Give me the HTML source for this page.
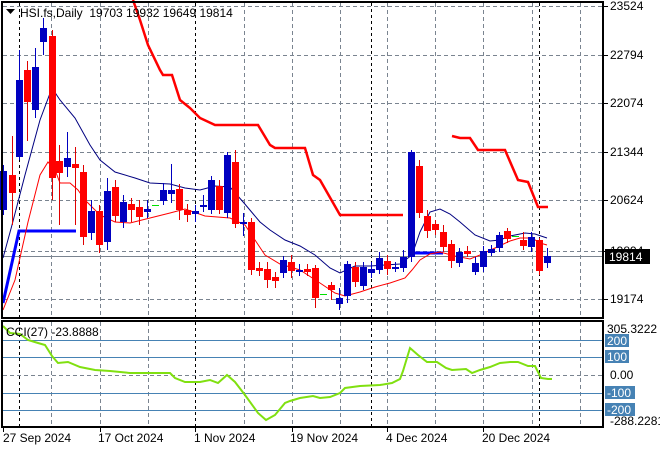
<!DOCTYPE html>
<html><head><meta charset="utf-8"><style>
html,body{margin:0;padding:0;background:#fff;width:660px;height:450px;overflow:hidden}
svg text{font-family:"Liberation Sans",sans-serif;font-size:12px;fill:#000}
</style></head><body>
<svg width="660" height="450" viewBox="0 0 660 450" xmlns="http://www.w3.org/2000/svg">
<g stroke="#7a8490" stroke-width="1" stroke-dasharray="4,3" fill="none">
<path d="M3 6.5H603M3 55.5H603M3 103.5H603M3 152.5H603M3 200.5H603M3 251.5H603M3 299.5H603"/>
<path d="M51.5 3V317M100.5 3V317M148.5 3V317M244.5 3V317M292.5 3V317M340.5 3V317M387.5 3V317M435.5 3V317M483.5 3V317M532.5 3V317M580.5 3V317"/>
<path d="M51.5 322V426M100.5 322V426M148.5 322V426M244.5 322V426M292.5 322V426M340.5 322V426M387.5 322V426M435.5 322V426M483.5 322V426M532.5 322V426M580.5 322V426"/>
<path d="M3 375.5H603"/>
</g>
<g stroke="#000" stroke-dasharray="3,3"><path d="M19.5 3V317M195.5 3V317M371.5 3V317M539.5 3V317M19.5 322V426M195.5 322V426M371.5 322V426M539.5 322V426"/></g>
<path d="M3 256.5H603" stroke="#7a8490"/>
<polyline fill="none" stroke="#ff0000" stroke-width="2.5" points="133,0 140,20 148,45 160,70 163,75 172,75 180,100 190,108 200,118 215,125 245,125 258,125 270,145 275,148 305,148 313,175 320,180 340,215 403,215"/>
<polyline fill="none" stroke="#ff0000" stroke-width="2.5" points="452,136 460,138 470,138 478,150 505,150 518,180 528,182 538,207 548,207"/>
<polyline fill="none" stroke="#0000ff" stroke-width="3" points="3,303 19,231 76,231"/>
<polyline fill="none" stroke="#0000ff" stroke-width="3" points="414,253 443,253"/>
<polyline fill="none" stroke="#000080" stroke-width="1" points="3,258 12,225 25,175 40,120 52,88 60,100 75,118 90,145 100,160 115,172 135,178 150,183 170,184 185,188 200,190 215,186 230,187 244,203 260,222 270,230 285,240 300,246 315,255 330,268 340,273 355,266 370,266 385,265 400,264 412,255 420,232 430,212 440,209 450,214 460,222 475,235 490,241 500,240 510,236 525,233 535,234 547,238"/>
<polyline fill="none" stroke="#ff0000" stroke-width="1" points="3,310 15,280 28,222 40,175 48,162 55,170 60,183 70,183 78,190 85,200 100,215 115,222 130,223 150,218 170,213 185,209 205,216 230,218 245,225 255,240 265,255 280,264 300,270 320,283 335,293 345,296 360,292 375,287 390,283 405,278 412,270 420,260 430,254 440,252 455,256 470,259 480,255 495,248 510,241 520,238 532,238 540,243 547,245"/>
<g stroke-width="1">
<path stroke="#0000c0" d="M3.5 165V215M19.5 50V160M35.5 48V118M43.5 18V55M67.5 132V177M91.5 200V240M107.5 178V250M123.5 195V228M147.5 200V218M163.5 183V205M171.5 164V203M195.5 205V222M203.5 195V212M211.5 176V214M227.5 152V218M243.5 213V236M283.5 256V278M299.5 264V276M339.5 288V310M347.5 261V303M363.5 262V290M371.5 262V278M379.5 252V274M395.5 262V272M403.5 250V272M411.5 150V262M459.5 248V267M475.5 257V275M483.5 246V272M491.5 245V256M499.5 232V252M531.5 232V252M547.5 248V268"/>
<path stroke="#e00000" d="M12.5 136V225M27.5 61V141M52.5 30V200M59.5 145V225M75.5 147V225M83.5 165V245M99.5 205V253M115.5 180V222M131.5 198V222M139.5 200V225M179.5 184V220M187.5 204V222M219.5 180V214M235.5 150V228M251.5 218V275M259.5 262V276M267.5 262V288M275.5 272V288M291.5 255V278M307.5 264V276M315.5 265V308M331.5 282V300M355.5 262V287M387.5 255V275M419.5 160V218M427.5 210V238M435.5 220V235M443.5 225V252M451.5 240V268M467.5 246V257M507.5 228V243M523.5 232V250M539.5 238V275"/>
</g>
<g fill="#0000c0">
<rect x="0" y="171" width="7" height="39"/><rect x="16" y="80" width="7" height="77"/><rect x="32" y="67" width="7" height="43"/><rect x="40" y="28" width="7" height="14"/><rect x="64" y="158" width="7" height="9"/><rect x="88" y="211" width="7" height="22"/><rect x="104" y="191" width="7" height="51"/><rect x="120" y="202" width="7" height="20"/><rect x="144" y="209" width="7" height="3"/><rect x="160" y="190" width="7" height="11"/><rect x="168" y="190" width="7" height="4"/><rect x="192" y="211" width="7" height="3"/><rect x="200" y="205" width="7" height="2"/><rect x="208" y="180" width="7" height="30"/><rect x="224" y="155" width="7" height="58"/><rect x="240" y="222" width="7" height="2"/><rect x="280" y="260" width="7" height="13"/><rect x="296" y="270" width="7" height="2"/><rect x="336" y="298" width="7" height="6"/><rect x="344" y="264" width="7" height="32"/><rect x="360" y="267" width="7" height="19"/><rect x="368" y="269" width="7" height="4"/><rect x="376" y="258" width="7" height="12"/><rect x="392" y="267" width="7" height="2"/><rect x="400" y="257" width="7" height="11"/><rect x="408" y="152" width="7" height="105"/><rect x="456" y="252" width="7" height="11"/><rect x="472" y="263" width="7" height="9"/><rect x="480" y="251" width="7" height="16"/><rect x="488" y="249" width="7" height="4"/><rect x="496" y="235" width="7" height="13"/><rect x="528" y="237" width="7" height="10"/><rect x="544" y="256" width="7" height="7"/>
</g>
<g fill="#ff0000">
<rect x="9" y="175" width="7" height="18"/><rect x="24" y="70" width="7" height="32"/><rect x="49" y="36" width="7" height="142"/><rect x="56" y="161" width="7" height="12"/><rect x="72" y="164" width="7" height="4"/><rect x="80" y="172" width="7" height="65"/><rect x="96" y="211" width="7" height="34"/><rect x="112" y="187" width="7" height="29"/><rect x="128" y="204" width="7" height="6"/><rect x="136" y="207" width="7" height="10"/><rect x="176" y="189" width="7" height="21"/><rect x="184" y="210" width="7" height="5"/><rect x="216" y="186" width="7" height="24"/><rect x="232" y="162" width="7" height="62"/><rect x="248" y="222" width="7" height="48"/><rect x="256" y="268" width="7" height="3"/><rect x="264" y="269" width="7" height="11"/><rect x="272" y="277" width="7" height="4"/><rect x="288" y="262" width="7" height="9"/><rect x="304" y="269" width="7" height="3"/><rect x="312" y="268" width="7" height="30"/><rect x="328" y="285" width="7" height="5"/><rect x="352" y="267" width="7" height="15"/><rect x="384" y="261" width="7" height="8"/><rect x="416" y="166" width="7" height="47"/><rect x="424" y="216" width="7" height="15"/><rect x="432" y="224" width="7" height="6"/><rect x="440" y="232" width="7" height="15"/><rect x="448" y="244" width="7" height="17"/><rect x="464" y="251" width="7" height="3"/><rect x="504" y="231" width="7" height="8"/><rect x="520" y="240" width="7" height="6"/><rect x="536" y="240" width="7" height="31"/>
</g>
<g stroke="#00e000"><path d="M152 205.5H159M320 294.5H327M512 236.5H519"/></g>
<g stroke="#4682b4"><path d="M3 340.5H603M3 357.5H603M3 393.5H603M3 410.5H603"/></g>
<polyline fill="none" stroke="#80e010" stroke-width="2" points="3,326 10,333 20,334 28,340 38,343 45,345 52,356 58,363 68,362 80,367 95,370 110,371 130,373 150,373 170,373 175,378 185,382 200,382 210,380 218,383 227,375 235,382 245,395 258,413 266,420 275,415 285,403 290,401 300,398 313,396 320,398 330,397 340,393 345,388 360,386 380,385 392,383 400,379 403,371 410,348 418,355 427,362 437,362 446,368 452,370 466,369 472,373 480,370 490,367 500,363 510,362 518,362 528,366 535,366 541,378 548,379 552,379"/>
<g fill="none" stroke="#000" stroke-width="2"><rect x="2" y="2" width="601" height="316"/><rect x="2" y="321" width="601" height="106"/></g>
<g stroke="#000"><path d="M603 6.5H608M603 55.5H608M603 103.5H608M603 152.5H608M603 200.5H608M603 251.5H608M603 299.5H608M3.5 427V432M100.5 427V432M195.5 427V432M292.5 427V432M387.5 427V432M483.5 427V432"/></g>
<g>
<text x="610" y="10">23524</text><text x="610" y="59">22794</text><text x="610" y="107">22074</text><text x="610" y="156">21344</text><text x="610" y="204">20624</text><text x="610" y="255">19894</text><text x="610" y="303">19174</text>
</g>
<rect x="605" y="249" width="45" height="15" fill="#000"/><text x="609" y="261" style="fill:#fff">19814</text>
<text x="607" y="333">305.3222</text>
<g fill="#4682b4"><rect x="605" y="334" width="24" height="13"/><rect x="605" y="350" width="24" height="13"/><rect x="605" y="386" width="30" height="13"/><rect x="605" y="403" width="30" height="13"/></g>
<text x="607" y="345" style="fill:#fff">200</text><text x="607" y="361" style="fill:#fff">100</text><text x="607" y="397" style="fill:#fff">-100</text><text x="607" y="414" style="fill:#fff">-200</text>
<text x="610" y="379">0.00</text>
<text x="610" y="425">-288.2281</text>
<text x="6" y="336">CCI(27) -23.8888</text>
<path d="M6 9H15L10.5 14Z" fill="#000"/>
<text x="20" y="17" xml:space="preserve" style="white-space:pre">HSI.fs,Daily  19703 19932 19649 19814</text>
<g><text x="3" y="442">27 Sep 2024</text><text x="98" y="442">17 Oct 2024</text><text x="194" y="442">1 Nov 2024</text><text x="290" y="442">19 Nov 2024</text><text x="386" y="442">4 Dec 2024</text><text x="482" y="442">20 Dec 2024</text></g>
</svg>
</body></html>
